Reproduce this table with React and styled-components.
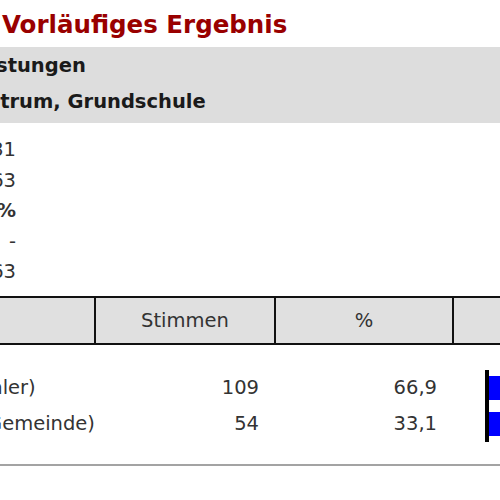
import React from "react";
import styled, { createGlobalStyle } from "styled-components";

const GlobalStyle = createGlobalStyle`
  html, body { margin: 0; padding: 0; background: #ffffff; overflow: hidden; }
  body { font-family: "DejaVu Sans", Verdana, sans-serif; color: #333333; }
`;

const COLS = "313px 180px 178px 248px";

const Viewport = styled.div`
  width: 500px;
  height: 500px;
  overflow: hidden;
`;

const Page = styled.div`
  width: 919px;
  margin-left: -219px;
`;

const Title = styled.h1`
  margin: 10px 0 0;
  padding-left: 221px;
  font-size: 24.5px;
  line-height: 30px;
  font-weight: bold;
  color: #990000;
  white-space: nowrap;
`;

const Band = styled.div`
  margin-top: 7px;
  padding: 1px 0 3px 0;
  background: #dddddd;
`;

const BandLine = styled.div`
  font-size: 19.5px;
  line-height: 36px;
  font-weight: bold;
  color: #1a1a1a;
  white-space: nowrap;
`;

const InfoList = styled.div`
  margin-top: 12px;
  padding-left: 6px;
`;

const InfoRow = styled.div`
  display: grid;
  grid-template-columns: 140px 89px;
  font-size: 19.5px;
  line-height: 30.5px;
  font-weight: ${(p) => (p.$strong ? "bold" : "normal")};
  color: #333333;
  white-space: nowrap;
`;

const InfoLabel = styled.span`
  overflow: hidden;
`;

const InfoValue = styled.span`
  text-align: right;
`;

const HeadRow = styled.div`
  display: grid;
  grid-template-columns: ${COLS};
  margin-top: 8px;
  border-top: 2px solid #111111;
  border-bottom: 2px solid #111111;
  background: #e0e0e0;
`;

const HeadCell = styled.div`
  border-left: 2px solid #111111;
  height: 45px;
  line-height: 45px;
  text-align: center;
  font-size: 19.5px;
  color: #333333;
  &:first-child {
    border-left: none;
  }
`;

const ResultBody = styled.div`
  margin-top: 25px;
`;

const DataRow = styled.div`
  display: grid;
  grid-template-columns: ${COLS};
  height: 36px;
  font-size: 19.5px;
  line-height: 36px;
  color: #333333;
`;

const NameCell = styled.div`
  padding-left: 6px;
  white-space: nowrap;
`;

const NumCell = styled.div`
  text-align: right;
  padding-right: 15px;
`;

const BarCell = styled.div`
  padding-left: 33px;
  display: flex;
`;

const BarAxis = styled.div`
  flex: 1;
  display: flex;
  align-items: center;
  border-left: 4px solid #000000;
`;

const Bar = styled.div`
  height: 24px;
  background: #0000ff;
`;

const Rule = styled.div`
  margin-top: 22px;
  border-top: 2px solid #a3a3a3;
`;

const info = [
  { label: "Wahlberechtigte", value: "1.231" },
  { label: "Wähler", value: "163" },
  { label: "Beteiligung", value: "13,2 %", strong: true },
  { label: "Ungültige", value: "-" },
  { label: "Gültige", value: "163" },
];

const results = [
  { name: "Max Müller (Freie Wähler)", votes: "109", pct: "66,9", share: 66.9 },
  { name: "Ada Frei (Wir für die Gemeinde)", votes: "54", pct: "33,1", share: 33.1 },
];

export default function App() {
  return (
    <>
      <GlobalStyle />
      <Viewport>
        <Page>
          <Title>Vorläufiges Ergebnis</Title>
          <Band>
            <BandLine>Bürgerentscheid Festungen</BandLine>
            <BandLine>Wahlbezirk 01 - Zentrum, Grundschule</BandLine>
          </Band>
          <InfoList>
            {info.map((r) => (
              <InfoRow key={r.label} $strong={r.strong}>
                <InfoLabel>{r.label}</InfoLabel>
                <InfoValue>{r.value}</InfoValue>
              </InfoRow>
            ))}
          </InfoList>
          <HeadRow>
            <HeadCell>Kandidat/in</HeadCell>
            <HeadCell>Stimmen</HeadCell>
            <HeadCell>%</HeadCell>
            <HeadCell />
          </HeadRow>
          <ResultBody>
            {results.map((r) => (
              <DataRow key={r.name}>
                <NameCell>{r.name}</NameCell>
                <NumCell>{r.votes}</NumCell>
                <NumCell>{r.pct}</NumCell>
                <BarCell>
                  <BarAxis>
                    <Bar style={{ width: `${r.share * 3}px` }} />
                  </BarAxis>
                </BarCell>
              </DataRow>
            ))}
          </ResultBody>
          <Rule />
        </Page>
      </Viewport>
    </>
  );
}
